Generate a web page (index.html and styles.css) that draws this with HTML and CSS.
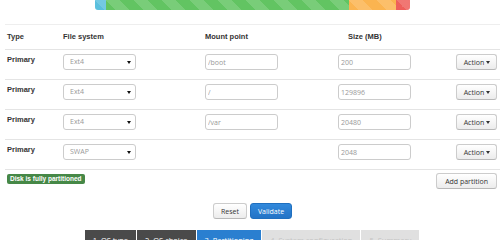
FILE: index.html
```html
<!DOCTYPE html>
<html lang="en">

<head>
    <meta charset="UTF-8">
    <title>Installer - Partitioning</title>
    <link rel="stylesheet" href="styles.css">
</head>

<body>
    <div class="page">
        <!-- disk usage bar -->
        <div class="disk-bar">
            <div class="seg seg-boot" style="width: 11px"></div>
            <div class="seg seg-root" style="width: 243px"></div>
            <div class="seg seg-var" style="width: 47px"></div>
            <div class="seg seg-swap" style="width: 14px"></div>
        </div>

        <div class="partitions">
            <div class="part-row part-head">
                <div>Type</div>
                <div>File system</div>
                <div>Mount point</div>
                <div class="size-head">Size (MB)</div>
                <div></div>
            </div>
            <div class="part-row">
                <div class="type">Primary</div>
                <div><div class="select">Ext4<span class="caret"></span></div></div>
                <div><input class="field" type="text" value="/boot"></div>
                <div><input class="field" type="text" value="200"></div>
                <div class="actions"><button class="btn">Action <span class="caret"></span></button></div>
            </div>
            <div class="part-row">
                <div class="type">Primary</div>
                <div><div class="select">Ext4<span class="caret"></span></div></div>
                <div><input class="field" type="text" value="/"></div>
                <div><input class="field" type="text" value="129896"></div>
                <div class="actions"><button class="btn">Action <span class="caret"></span></button></div>
            </div>
            <div class="part-row">
                <div class="type">Primary</div>
                <div><div class="select">Ext4<span class="caret"></span></div></div>
                <div><input class="field" type="text" value="/var"></div>
                <div><input class="field" type="text" value="20480"></div>
                <div class="actions"><button class="btn">Action <span class="caret"></span></button></div>
            </div>
            <div class="part-row">
                <div class="type">Primary</div>
                <div><div class="select">SWAP<span class="caret"></span></div></div>
                <div></div>
                <div><input class="field" type="text" value="2048"></div>
                <div class="actions"><button class="btn">Action <span class="caret"></span></button></div>
            </div>
            <div class="part-foot">
                <span class="label-ok">Disk is fully partitioned</span>
                <button class="btn">Add partition</button>
            </div>
        </div>

        <div class="form-buttons">
            <button class="btn">Reset</button>
            <button class="btn btn-primary">Validate</button>
        </div>

        <!-- wizard steps -->
        <div class="steps">
            <div class="step done">1. OS type</div>
            <div class="step done">2. OS choice</div>
            <div class="step current">3. Partitioning</div>
            <div class="step todo">4. System configuration</div>
            <div class="step todo">5. Summary</div>
        </div>
    </div>
</body>

</html>
```

FILE: styles.css
```css
body {
    margin: 0;
    padding: 0;
    background-color: #fff;
    font-family: "Open Sans", sans-serif;
    font-size: 7px;
    color: #333;
}

.page {
    padding-left: 5px;
}

.disk-bar {
    display: flex;
    width: 315px;
    height: 10px;
    margin: 0 auto 14px auto;
    border-radius: 0 0 3px 3px;
    overflow: hidden;
}

.seg {
    height: 100%;
    background-image: linear-gradient(45deg, rgba(255, 255, 255, 0.15) 25%, transparent 25%, transparent 50%, rgba(255, 255, 255, 0.15) 50%, rgba(255, 255, 255, 0.15) 75%, transparent 75%, transparent);
    background-size: 28px 28px;
}

.seg-boot {
    background-color: #5bc0de;
}

.seg-root {
    background-color: #62c462;
}

.seg-var {
    background-color: #fbb450;
}

.seg-swap {
    background-color: #ee5f5b;
}

.partitions {
    border-top: 1px solid #eee;
}

.part-row {
    display: grid;
    grid-template-columns: 56px 142px 133px 1fr auto;
    height: 25px;
    padding: 4px 3px 0 2px;
    box-sizing: content-box;
    border-bottom: 1px solid #e4e4e4;
    font-family: "Liberation Sans", Arial, sans-serif;
    font-weight: bold;
    font-size: 7.5px;
    color: #333;
}

.part-row > div {
    line-height: 10px;
}

.part-head {
    height: 24px;
    padding-top: 0;
    align-items: center;
}

.part-row > div.type {
    padding-top: 1px;
}

.size-head {
    padding-left: 10px;
}

.actions {
    text-align: right;
}

.select,
.field {
    box-sizing: border-box;
    width: 73px;
    height: 16px;
    border: 1px solid #ccc;
    border-radius: 3px;
    background-color: #fff;
    font-family: "Open Sans", sans-serif;
    font-weight: normal;
    font-size: 7px;
    color: #999;
}

.select {
    display: flex;
    align-items: center;
    justify-content: space-between;
    padding: 0 4px 0 6px;
}

.select .caret {
    border-top-color: #111;
}

.field {
    padding: 0 2px;
    outline: none;
}

.caret {
    display: inline-block;
    width: 0;
    height: 0;
    border-left: 2px solid transparent;
    border-right: 2px solid transparent;
    border-top: 3px solid #333;
    vertical-align: middle;
}

.btn {
    height: 16px;
    padding: 0 6px;
    border: 1px solid #ccc;
    border-bottom-color: #b8b8b8;
    border-radius: 3px;
    background-image: linear-gradient(#fff, #ececec);
    font-family: "Open Sans", sans-serif;
    font-size: 7px;
    color: #333;
    cursor: pointer;
}

.part-row .btn {
    padding: 0 6px 0 7px;
}

.part-foot {
    display: flex;
    justify-content: space-between;
    align-items: flex-start;
    padding: 3px 3px 0 2px;
}

.part-foot .btn {
    padding: 0 8px;
}

.label-ok {
    margin-top: 1px;
    padding: 1px 3px;
    border-radius: 2px;
    background-color: #468847;
    color: #fff;
    font-family: "Liberation Sans", Arial, sans-serif;
    font-weight: bold;
    font-size: 6.5px;
    line-height: 8px;
}

.form-buttons {
    display: flex;
    justify-content: center;
    gap: 3px;
    margin-top: 14px;
}

.form-buttons .btn {
    padding: 0 7px;
}

.btn-primary {
    border-color: #1f6fbf;
    background-image: linear-gradient(#3189dc, #2373c6);
    color: #fff;
}

.steps {
    display: flex;
    justify-content: center;
    margin-top: 11px;
}

.step {
    height: 18px;
    padding: 5px 8px 0 8px;
    box-sizing: border-box;
    margin-right: 1px;
    font-size: 7.5px;
    color: #fff;
}

.step.done {
    background-color: #4a4a4a;
}

.step.current {
    background-color: #2a7fd0;
}

.step.todo {
    background-color: #e0e0e0;
    color: #c4c4c4;
}
```
